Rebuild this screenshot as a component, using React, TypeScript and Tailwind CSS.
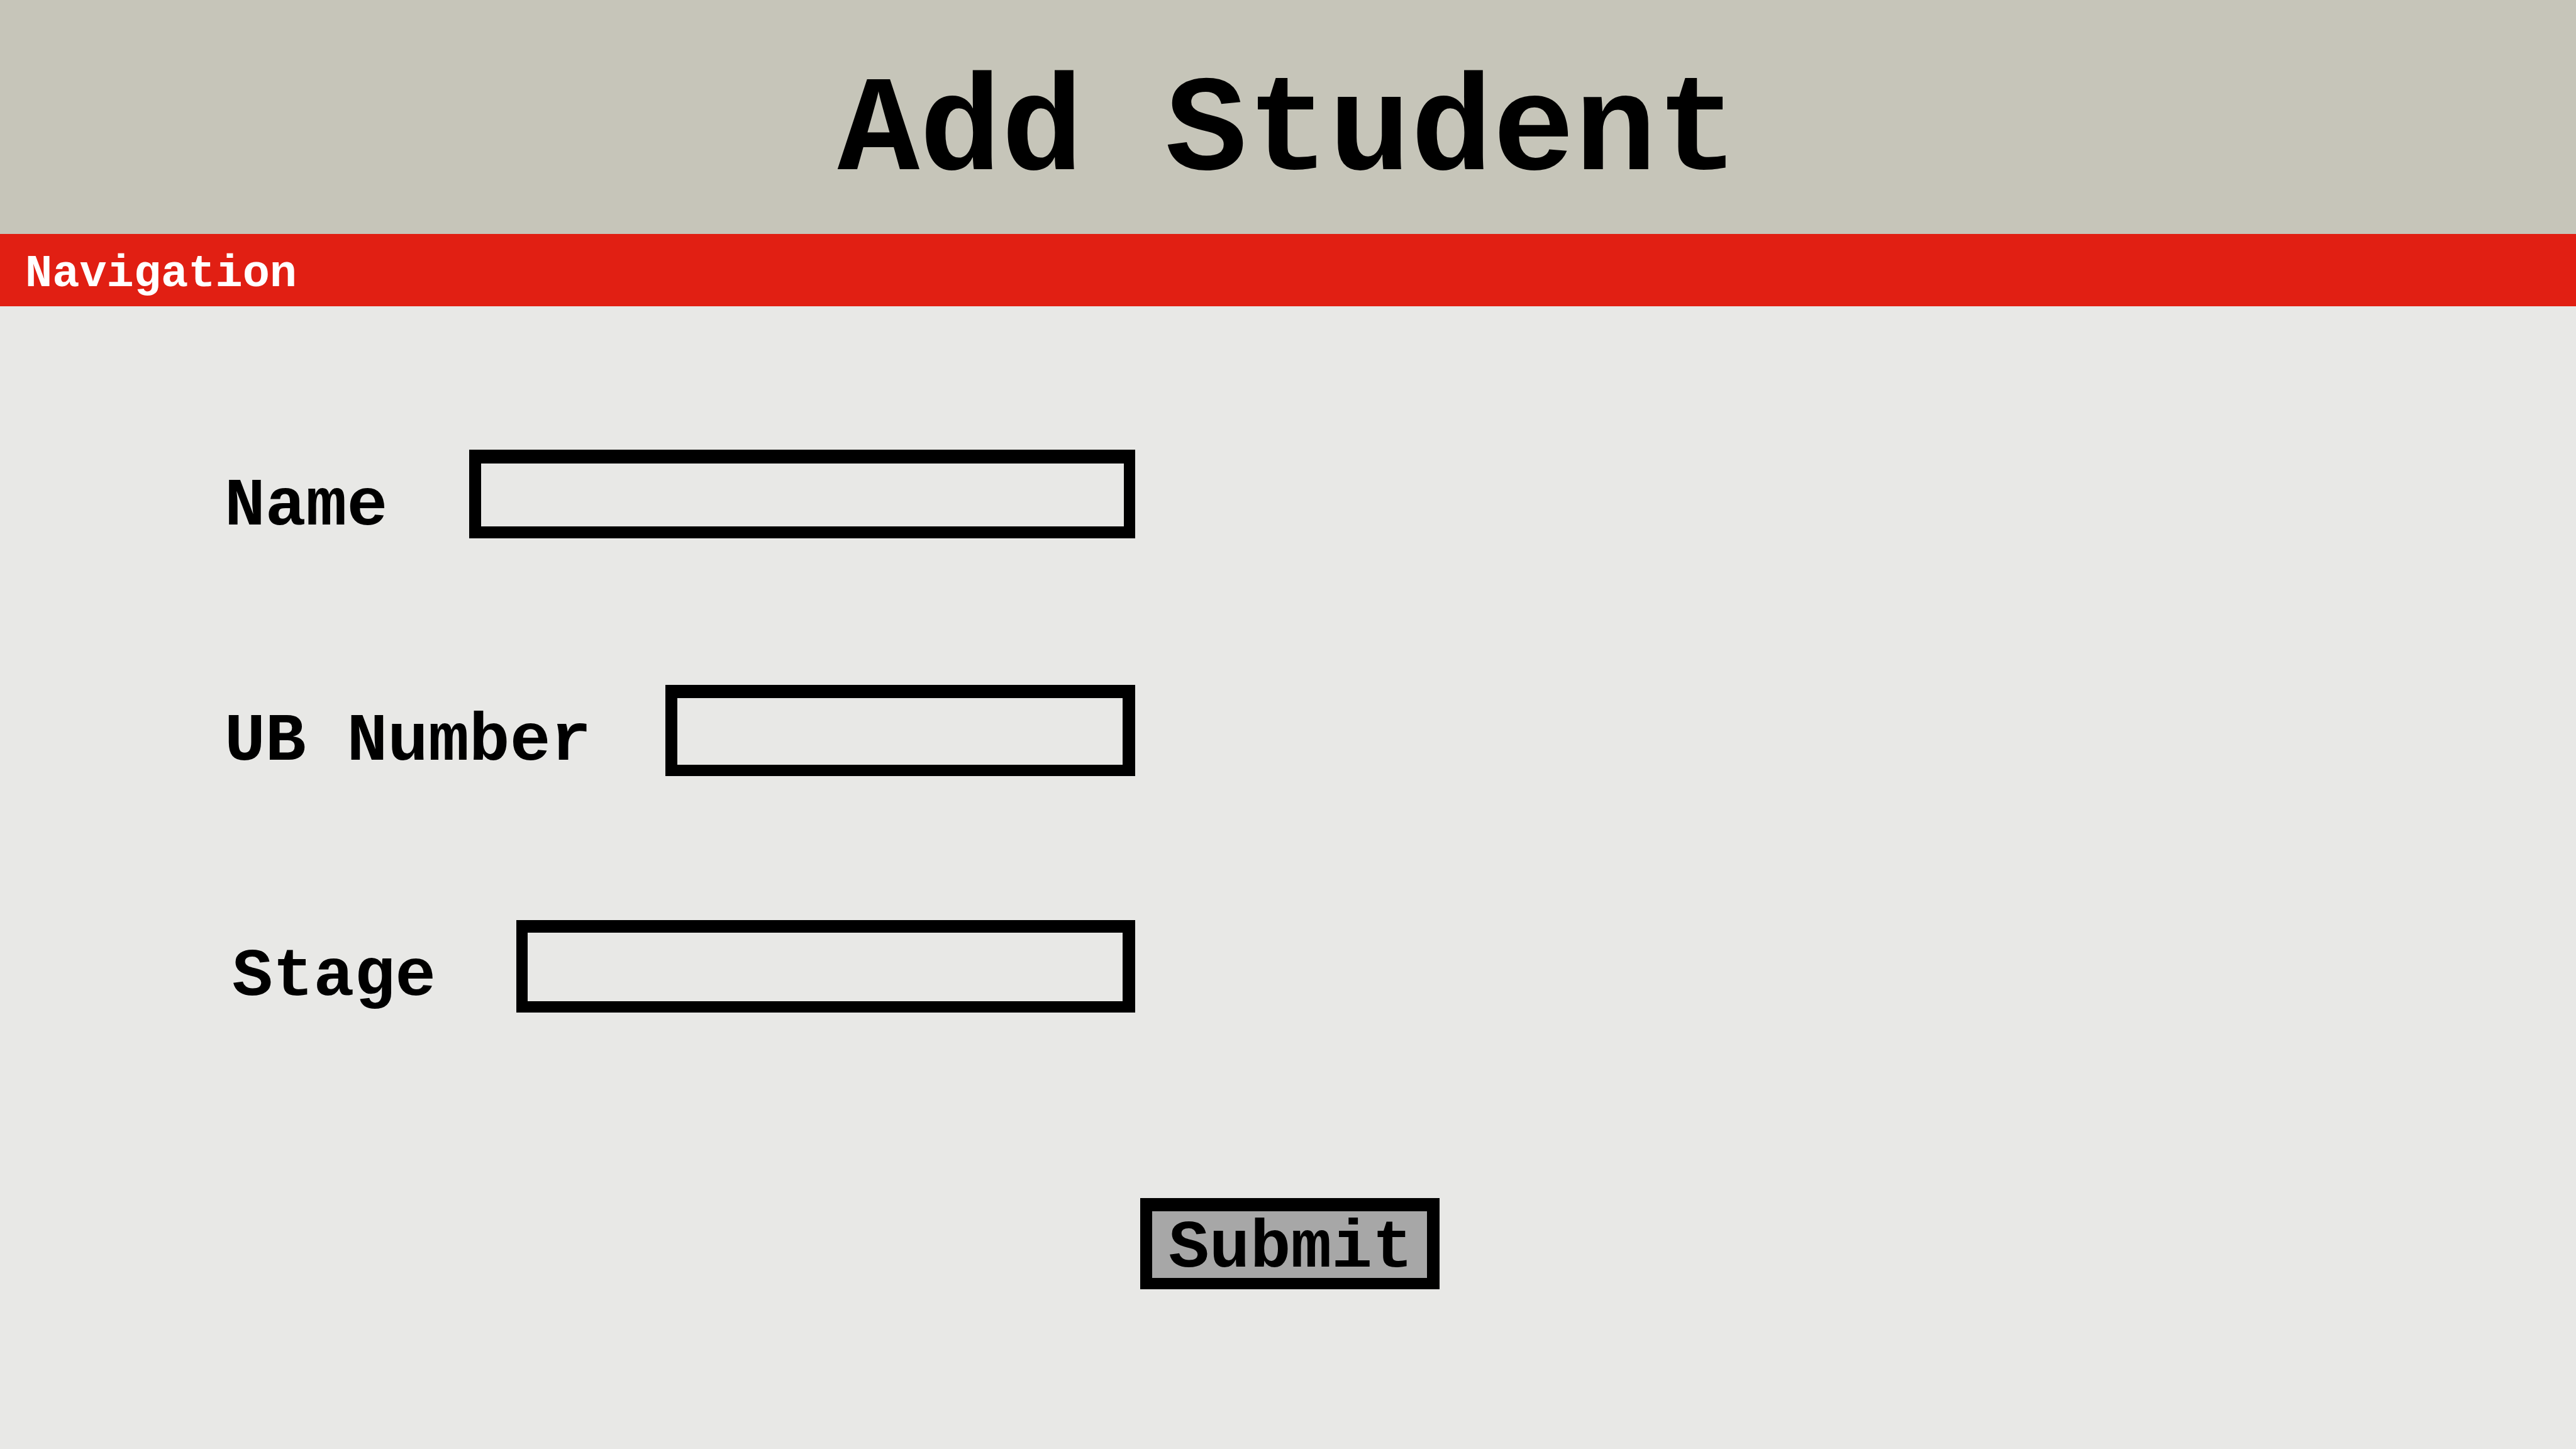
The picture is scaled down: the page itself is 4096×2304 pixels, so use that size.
type Field = { id: string; label: string; labelClass: string; inputClass: string };

const fields: Field[] = [
  {
    id: 'name',
    label: 'Name',
    labelClass: 'w-[389px]',
    inputClass: 'h-[141px] border-t-[22px] border-r-[18px] border-b-[19px] border-l-[19px]',
  },
  {
    id: 'ub-number',
    label: 'UB Number',
    labelClass: 'w-[701px]',
    inputClass: 'h-[145px] border-t-[21px] border-r-[20px] border-b-[18px] border-l-[19px]',
  },
  {
    id: 'stage',
    label: 'Stage',
    labelClass: 'w-[464px] pl-3',
    inputClass: 'h-[147px] border-t-[20px] border-r-[20px] border-b-[18px] border-l-[18px]',
  },
];

function FieldRow({ field }: { field: Field }) {
  return (
    <div className="flex items-start">
      <label
        htmlFor={field.id}
        className={`shrink-0 whitespace-nowrap pt-[18px] text-[108px] leading-[144px] ${field.labelClass}`}
      >
        {field.label}
      </label>
      <input
        id={field.id}
        type="text"
        className={`w-0 min-w-0 flex-1 border-black bg-transparent px-6 text-[72px] outline-none ${field.inputClass}`}
      />
    </div>
  );
}

export default function App() {
  return (
    <div className="flex min-h-screen flex-col bg-[#e8e8e6] font-['Courier_New','Liberation_Mono',monospace] font-bold text-black">
      <header className="bg-[#c6c5b9] pt-[50px] text-center">
        <h1 className="text-[217px] leading-[322px]">Add Student</h1>
      </header>
      <nav className="flex bg-[#e11f13] px-10 pt-[14px] text-[72px] leading-[101px] text-white">
        <a href="#navigation">Navigation</a>
      </nav>
      <main className="flex-1 pt-[228px]">
        <form onSubmit={(e) => e.preventDefault()}>
          <div className="ml-[357px] grid w-[35.35%] auto-rows-[374px] grid-cols-1">
            {fields.map((field) => (
              <FieldRow key={field.id} field={field} />
            ))}
          </div>
          <div className="flex justify-center pt-[68px] pl-1.5">
            <button
              type="submit"
              className="w-[476px] border-t-[21px] border-r-[20px] border-b-[18px] border-l-[19px] border-black bg-[#a7a7a7] pt-[12px] pl-1 text-[108px] leading-[94px]"
            >
              Submit
            </button>
          </div>
        </form>
      </main>
    </div>
  );
}
